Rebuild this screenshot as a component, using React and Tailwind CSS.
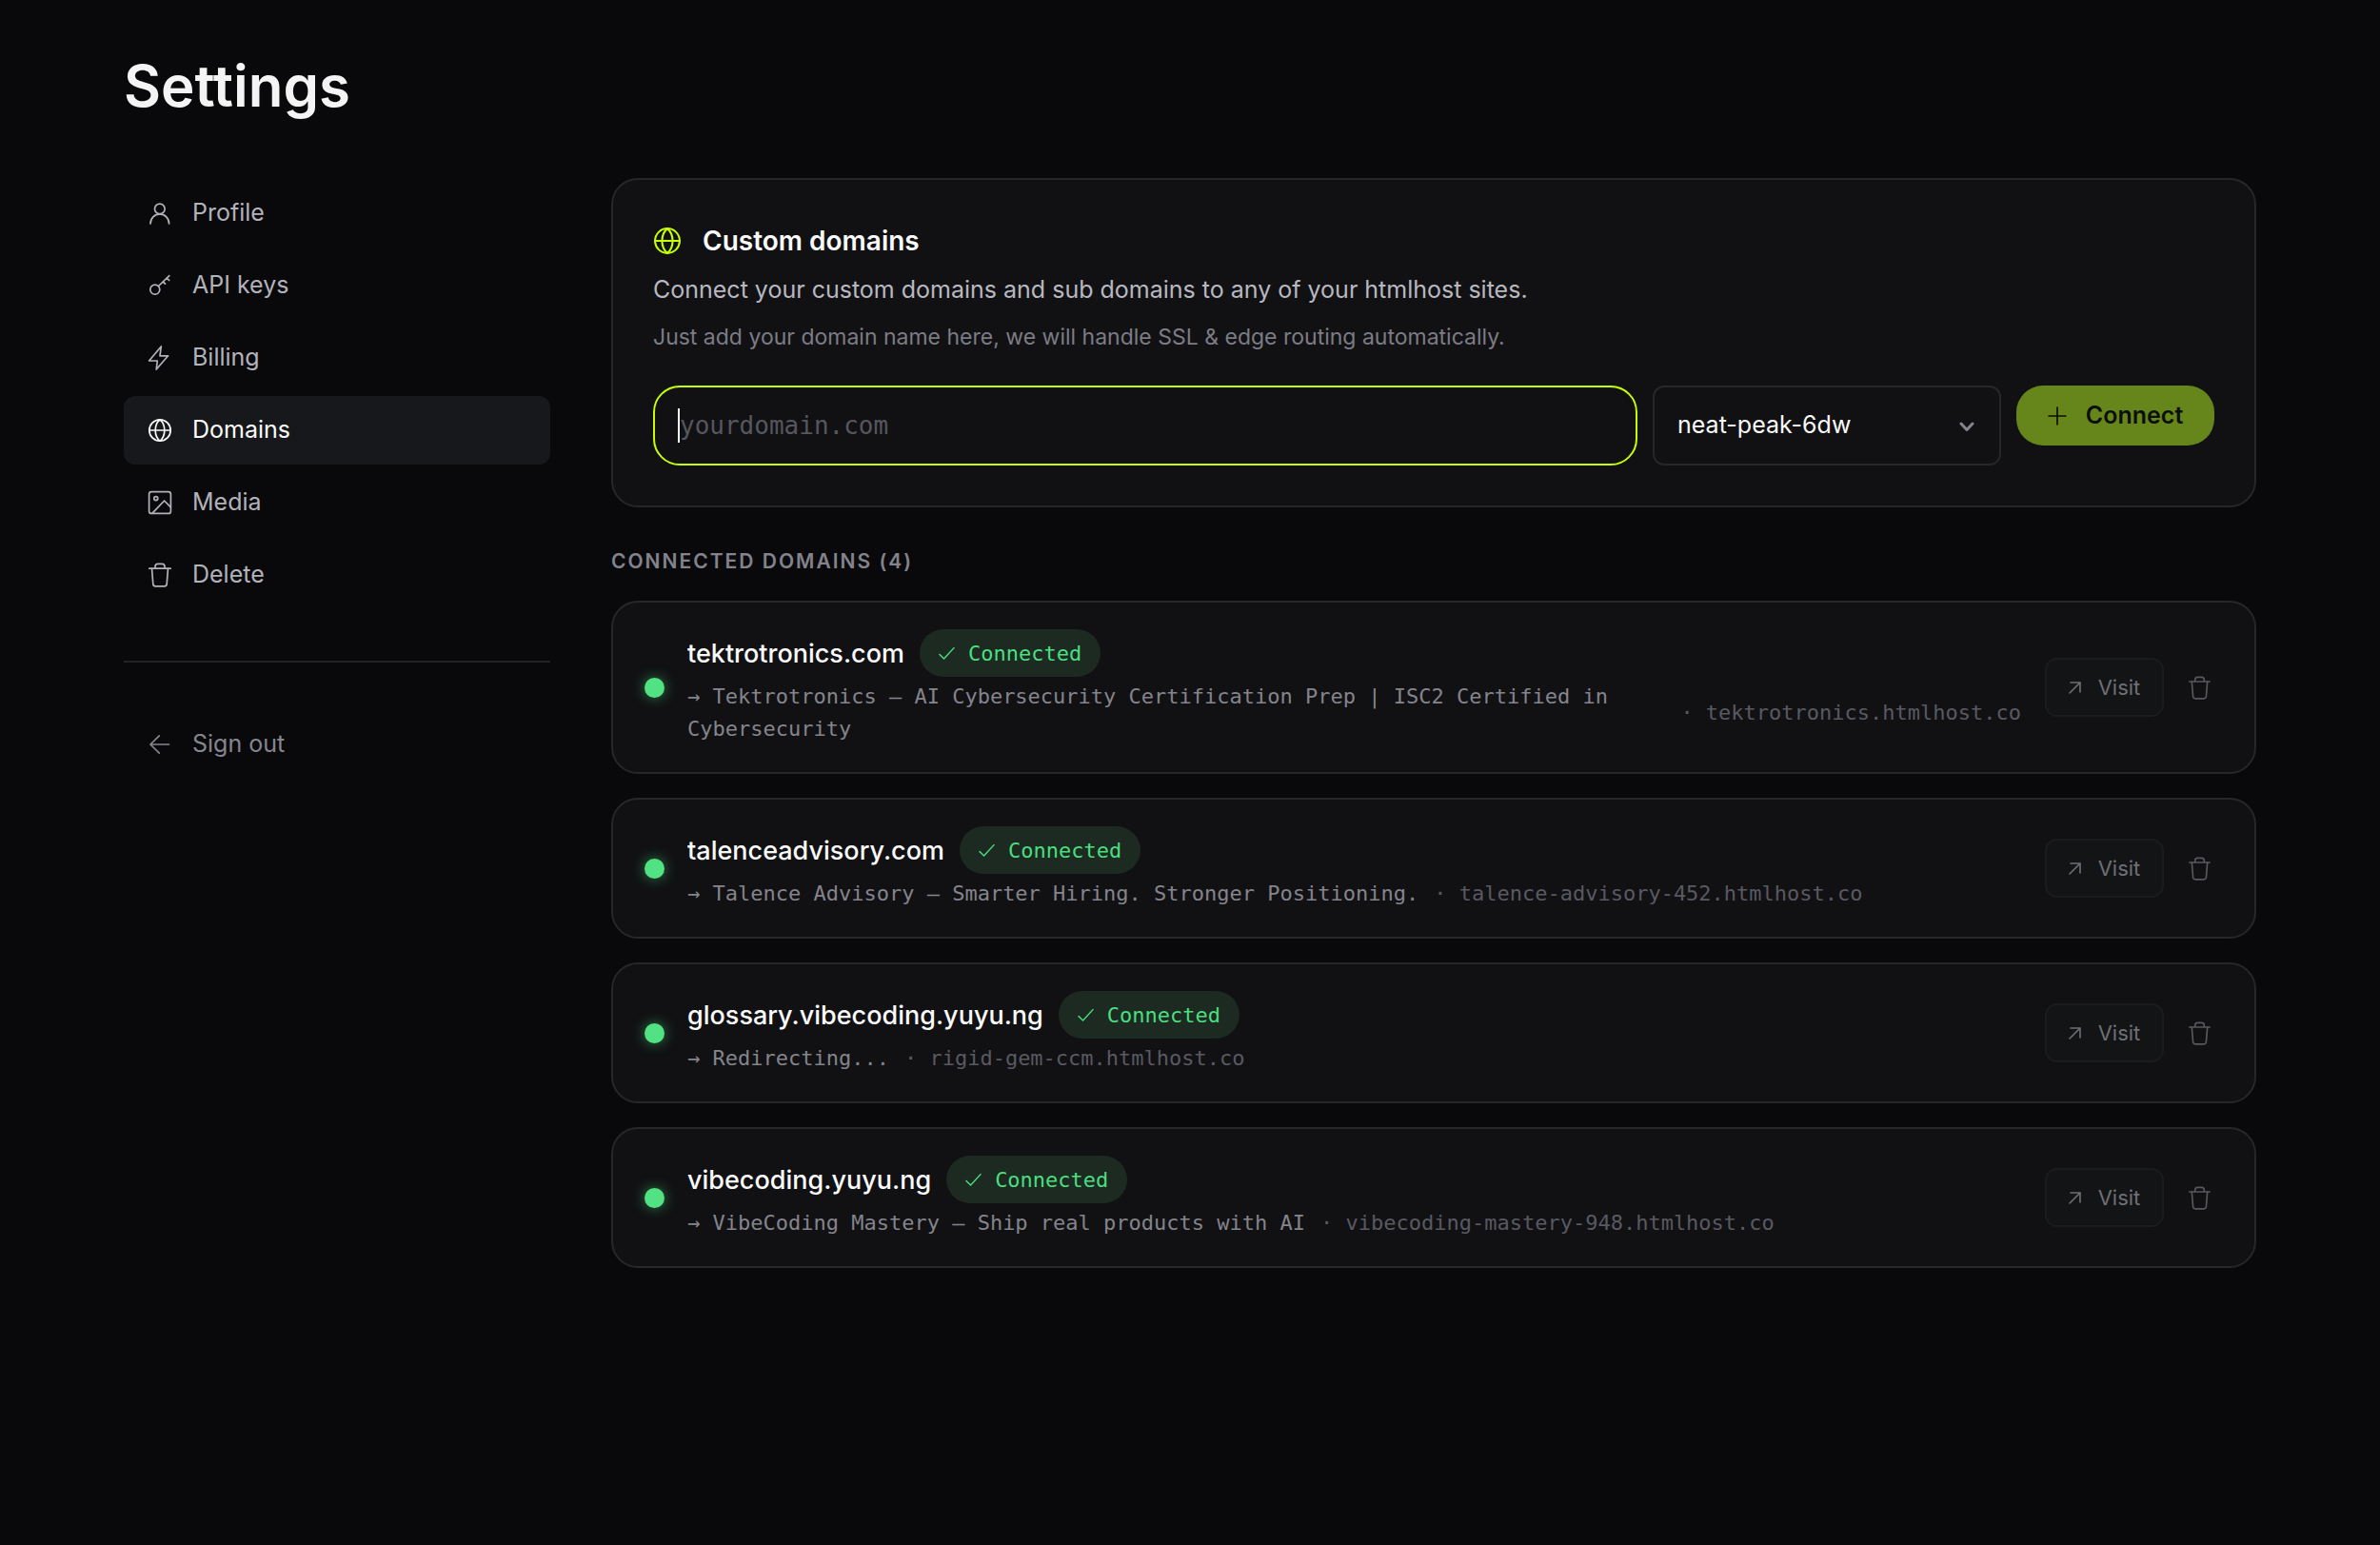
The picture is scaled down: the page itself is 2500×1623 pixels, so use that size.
const mono = "font-['DejaVu_Sans_Mono',monospace]";

function Icon({ size = 26, stroke = 1.7, className = "", children }) {
  return (
    <svg
      width={size}
      height={size}
      viewBox="0 0 26 26"
      fill="none"
      stroke="currentColor"
      strokeWidth={stroke}
      strokeLinecap="round"
      strokeLinejoin="round"
      aria-hidden="true"
      className={`shrink-0 ${className}`}
    >
      {children}
    </svg>
  );
}

const glyphs = {
  user: (
    <>
      <circle cx="12.8" cy="8.4" r="5.3" />
      <path d="M3 24c0-5.600 4.300-10.100 9.800-10.100S22.600 18.400 22.600 24" />
    </>
  ),
  key: (
    <>
      <circle cx="7.800" cy="17.200" r="5" />
      <path d="M11.500 13.500 22.800 2.700M16.300 8.900l2.200 2.300M20.300 5l2.400 2.500" />
    </>
  ),
  bolt: <path d="M14.300 1 13 10.800h8.600L9.200 25l1.100-9H1.600z" />,
  globe: (
    <>
      <circle cx="13" cy="13" r="11.200" />
      <path d="M1.800 13h22.400M13 1.800c-3.200 2.600-4.800 6.800-4.800 11.200s1.600 8.600 4.800 11.200c3.200-2.600 4.800-6.800 4.800-11.200S16.200 4.400 13 1.800z" />
    </>
  ),
  image: (
    <>
      <rect x="1.600" y="1.600" width="22.800" height="22.800" rx="2.500" />
      <circle cx="8.800" cy="8.600" r="2" />
      <path d="M5 24.200 17.600 11l6.800 6.800" />
    </>
  ),
  trash: (
    <>
      <path d="M1.800 6.200h22.400M8 6V4.200Q8 1.400 10.800 1.400h4.400Q18 1.400 18 4.200V6" />
      <path d="M4.500 6.400l1.300 16q.2 2.400 2.500 2.400h9.400q2.300 0 2.500-2.400l1.300-16" />
    </>
  ),
  back: <path d="M22.500 13H3M12.300 3.800 3 13l9.300 9.200" />,
  plus: <path d="M13 1.500v23M1.500 13h23" />,
  check: <path d="M1.500 14.500l7 7L24.500 4" />,
  out: <path d="M2 24 24 2M4 2h20v20" strokeLinejoin="miter" />,
};

const nav = [
  { label: "Profile", icon: glyphs.user },
  { label: "API keys", icon: glyphs.key },
  { label: "Billing", icon: glyphs.bolt },
  { label: "Domains", icon: glyphs.globe, active: true },
  { label: "Media", icon: glyphs.image },
  { label: "Delete", icon: glyphs.trash },
];

const domains = [
  {
    name: "tektrotronics.com",
    title: "Tektrotronics — AI Cybersecurity Certification Prep | ISC2 Certified in Cybersecurity",
    host: "tektrotronics.htmlhost.co",
  },
  {
    name: "talenceadvisory.com",
    title: "Talence Advisory — Smarter Hiring. Stronger Positioning.",
    host: "talence-advisory-452.htmlhost.co",
  },
  { name: "glossary.vibecoding.yuyu.ng", title: "Redirecting...", host: "rigid-gem-ccm.htmlhost.co" },
  {
    name: "vibecoding.yuyu.ng",
    title: "VibeCoding Mastery — Ship real products with AI",
    host: "vibecoding-mastery-948.htmlhost.co",
  },
];

function Sidebar() {
  return (
    <aside className="w-[448px] shrink-0 pt-px text-[25px]">
      <nav className="flex flex-col gap-1">
        {nav.map((item) => (
          <a
            key={item.label}
            href="#"
            aria-current={item.active ? "page" : undefined}
            className={`flex h-[72px] items-center gap-[21px] rounded-xl px-[25px] ${
              item.active ? "bg-[#17181b] text-[#fafafa]" : "text-[#b2b2ba]"
            }`}
          >
            <Icon>{item.icon}</Icon>
            {item.label}
          </a>
        ))}
      </nav>
      <hr className="mt-[54px] mb-[50px] border-t-2 border-[#232327]" />
      <button
        type="button"
        className="flex h-[72px] w-full items-center gap-[21px] rounded-xl px-[25px] text-[#85858e]"
      >
        <Icon>{glyphs.back}</Icon>
        Sign out
      </button>
    </aside>
  );
}

function AddDomain() {
  return (
    <section className="rounded-[28px] border-2 border-[#27272a] bg-[#111113] p-[42px]">
      <h2 className="flex h-11 items-center gap-[22px] text-[28px] font-semibold text-[#fafafa]">
        <Icon size={30} stroke={1.8} className="text-[#c6ff00]">
          {glyphs.globe}
        </Icon>
        Custom domains
      </h2>
      <p className="mt-2 text-[25px] leading-[42px] text-[#b8b8c0]">
        Connect your custom domains and sub domains to any of your htmlhost sites.
      </p>
      <p className="mt-2 text-[23px] leading-[42px] text-[#7c7c85]">
        Just add your domain name here, we will handle SSL &amp; edge routing automatically.
      </p>
      <form className="mt-[30px] flex items-start gap-4" onSubmit={(e) => e.preventDefault()}>
        <div className="relative min-w-0 flex-1">
          <input
            type="text"
            aria-label="Domain name"
            placeholder="yourdomain.com"
            className={`h-[84px] w-full rounded-[28px] border-2 border-[#c6ff00] bg-transparent px-[26px] text-[26px] text-[#fafafa] outline-none placeholder:text-[#56565f] ${mono}`}
          />
          <span className="absolute top-6 left-[26px] h-9 w-[2px] bg-[#fafafa]" />
        </div>
        <div className="relative w-[366px]">
          <select
            aria-label="Site"
            className="h-[84px] w-full appearance-none rounded-xl border-2 border-[#27272a] bg-[#111113] px-6 text-[25px] text-[#fafafa]"
          >
            <option>neat-peak-6dw</option>
          </select>
          <svg
            width="16"
            height="11"
            viewBox="0 0 16 11"
            fill="none"
            stroke="#85858e"
            strokeWidth="3"
            strokeLinecap="round"
            strokeLinejoin="round"
            aria-hidden="true"
            className="pointer-events-none absolute top-[38px] right-7"
          >
            <path d="M2 2l6 6.500L14 2" />
          </svg>
        </div>
        <button
          type="submit"
          className="flex h-[63px] w-[208px] items-center justify-center gap-5 rounded-[28px] bg-[#66861b] text-[25px] font-semibold text-[#0c0f09]"
        >
          <Icon size={20} stroke={2.2}>
            {glyphs.plus}
          </Icon>
          Connect
        </button>
      </form>
    </section>
  );
}

function DomainRow({ name, title, host }) {
  return (
    <li className="flex items-center rounded-[28px] border-2 border-[#27272a] bg-[#111113] px-[33px] py-7">
      <span className="size-[21px] shrink-0 rounded-full bg-[#52e283] shadow-[0_0_14px_rgba(74,222,128,0.55)]" />
      <div className="ml-6 min-w-0 flex-1">
        <div className="flex items-center gap-4">
          <h3 className="pt-[3px] text-[27px] font-medium text-[#fafafa]">{name}</h3>
          <span
            className={`flex h-[50px] items-center gap-[14px] rounded-full bg-[#1d2a21] px-5 text-[22px] text-[#4ade80] ${mono}`}
          >
            <Icon size={17} stroke={2.2}>
              {glyphs.check}
            </Icon>
            Connected
          </span>
        </div>
        <p className={`mt-1 flex items-center gap-4 text-[22px] leading-[34px] text-[#84848c] ${mono}`}>
          <span>{`→ ${title}`}</span>
          <span className="shrink-0 text-[#595962]">{`· ${host}`}</span>
        </p>
      </div>
      <a
        href="#"
        className="ml-[25px] flex h-[62px] w-[125px] shrink-0 items-center justify-center gap-[18px] rounded-[13px] border-2 border-[#1b1c1e] bg-[#131416] text-[22px] text-[#6f6f74]"
      >
        <Icon size={13} stroke={3.2}>
          {glyphs.out}
        </Icon>
        Visit
      </a>
      <button
        type="button"
        aria-label={`Delete ${name}`}
        className="ml-3 flex size-[50px] shrink-0 items-center justify-center text-[#58585e]"
      >
        <Icon size={25}>{glyphs.trash}</Icon>
      </button>
    </li>
  );
}

export default function App() {
  return (
    <div className="min-h-screen bg-[#09090b] px-8 pt-[54px] pb-16 font-['Inter',sans-serif]">
      <div className="mx-auto max-w-[2240px]">
        <h1 className="text-[60px] leading-[72px] font-semibold text-[#f4f4f5]">Settings</h1>
        <div className="mt-[61px] flex items-start gap-16">
          <Sidebar />
          <main className="min-w-0 flex-1">
            <AddDomain />
            <h2 className="mt-10 text-[21px] leading-[34px] font-semibold tracking-[2px] text-[#83838c] uppercase">
              Connected domains (4)
            </h2>
            <ul className="mt-6 flex flex-col gap-[25px]">
              {domains.map((d) => (
                <DomainRow key={d.name} {...d} />
              ))}
            </ul>
          </main>
        </div>
      </div>
    </div>
  );
}
